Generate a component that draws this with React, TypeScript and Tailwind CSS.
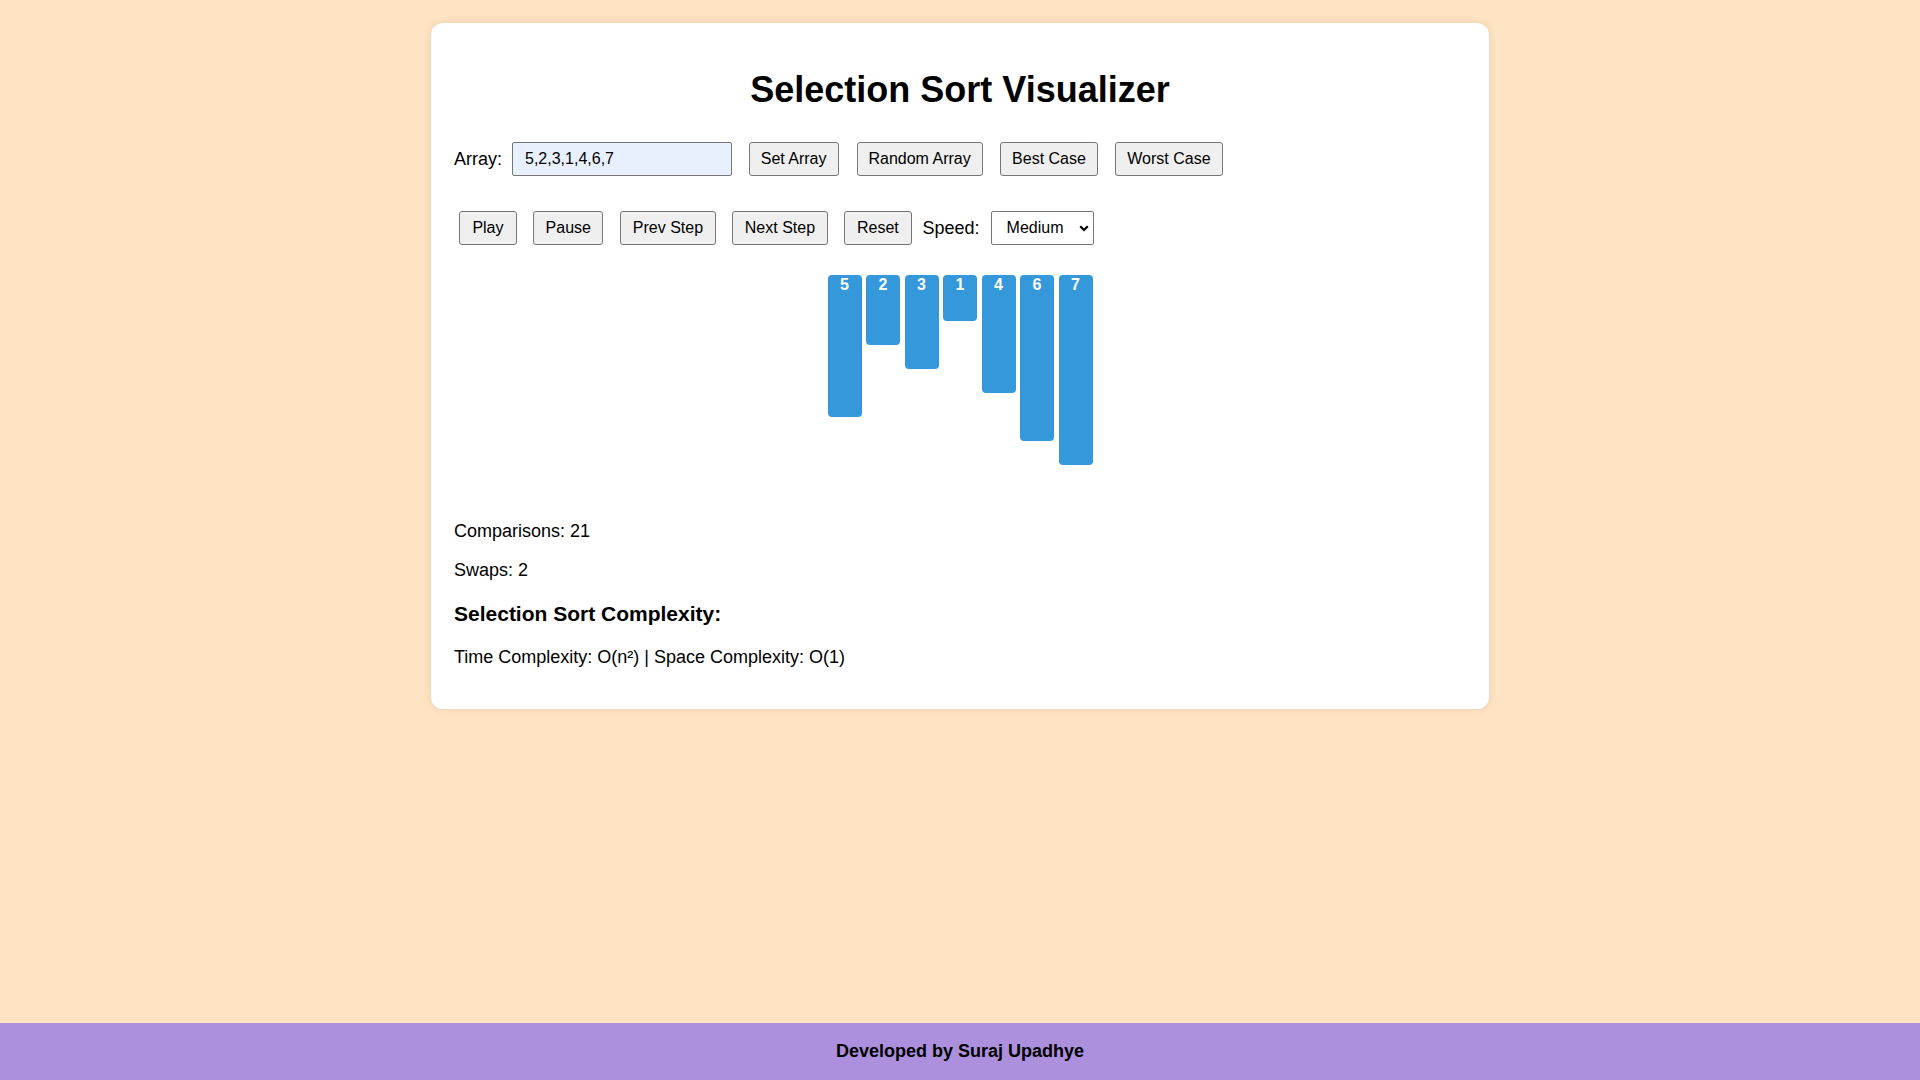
import React from "react";

const values = [5, 2, 3, 1, 4, 6, 7];

function Btn({ label, className }: { label: string; className: string }) {
  return (
    <button
      className={
        "h-[34px] shrink-0 rounded-[3px] border border-[#767676] bg-[#efefef] text-center text-[16px] leading-[18px] text-black " +
        className
      }
    >
      {label}
    </button>
  );
}

export default function App() {
  return (
    <div className="flex min-h-screen flex-col bg-[#ffe4c4] font-['Liberation_Sans',Arial,sans-serif] text-[18px] text-black">
      <div className="mx-auto mt-[23px] w-[1058px] rounded-[12px] bg-white px-[23px] pt-[23px] pb-[41px] shadow-[0_0_10px_rgba(0,0,0,0.1)]">
        <h1 className="mt-[23px] text-center text-[36px] leading-[41px] font-bold">
          Selection Sort Visualizer
        </h1>

        <div className="mt-[32px] flex h-[34px] items-center">
          <span className="leading-[21px]">Array:</span>
          <input
            readOnly
            value="5,2,3,1,4,6,7"
            className="ml-[10px] h-[34px] w-[220px] rounded-[2px] border border-[#767676] bg-[#e8f0fe] px-[12px] text-[16px] text-black outline-none"
          />
          <Btn label="Set Array" className="ml-[16.6px] w-[90px]" />
          <Btn label="Random Array" className="ml-[18px] w-[126px]" />
          <Btn label="Best Case" className="ml-[17.4px] w-[98px]" />
          <Btn label="Worst Case" className="ml-[17.3px] w-[107.3px]" />
        </div>

        <div className="mt-[35px] flex h-[34px] items-center">
          <Btn label="Play" className="ml-[5.3px] w-[57.3px]" />
          <Btn label="Pause" className="ml-[16.7px] w-[70px]" />
          <Btn label="Prev Step" className="ml-[17px] w-[95.3px]" />
          <Btn label="Next Step" className="ml-[16.7px] w-[95.3px]" />
          <Btn label="Reset" className="ml-[16.7px] w-[67.3px]" />
          <span className="ml-[11px] leading-[21px]">Speed:</span>
          <div className="relative ml-[11px] h-[34px] w-[103.7px]">
            <select
              defaultValue="medium"
              className="h-[34px] w-full appearance-none rounded-[2px] border border-[#767676] bg-white pl-[15px] text-[16px] text-black outline-none"
            >
              <option value="slow">Slow</option>
              <option value="medium">Medium</option>
              <option value="fast">Fast</option>
            </select>
            <svg
              className="pointer-events-none absolute top-[14px] right-[5px]"
              width="10"
              height="7"
              viewBox="0 0 10 7"
            >
              <path d="M1.2 1.2 L5 5 L8.8 1.2" fill="none" stroke="#000" strokeWidth="2.2" />
            </svg>
          </div>
        </div>

        <div className="mt-[30px] flex h-[228px] items-start justify-center gap-[4.5px]">
          {values.map((v, i) => (
            <div
              key={i}
              className="w-[34px] rounded-[4px] bg-[#3498db] pt-[1px] text-center text-[16px] leading-[18px] font-bold text-white"
              style={{ height: `${v * 24 + 22}px` }}
            >
              {v}
            </div>
          ))}
        </div>

        <p className="mt-[18px] leading-[21px]">Comparisons: 21</p>
        <p className="mt-[18px] leading-[21px]">Swaps: 2</p>
        <h3 className="mt-[21px] text-[21px] leading-[24px] font-bold">Selection Sort Complexity:</h3>
        <p className="mt-[21px] leading-[21px]">Time Complexity: O(n²) | Space Complexity: O(1)</p>
      </div>

      <footer className="mt-auto flex h-[57.3px] items-center justify-center bg-[#ac8fdd] font-bold">
        Developed by Suraj Upadhye
      </footer>
    </div>
  );
}
